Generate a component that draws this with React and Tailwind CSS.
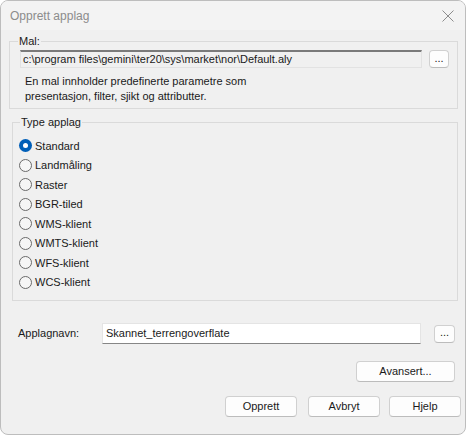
import { useState } from 'react';

const types = [
  'Standard',
  'Landmåling',
  'Raster',
  'BGR-tiled',
  'WMS-klient',
  'WMTS-klient',
  'WFS-klient',
  'WCS-klient',
];

function DotsButton({ className = '' }) {
  return (
    <button
      className={`flex items-center justify-center rounded-[4px] border border-[#d0d0d0] border-b-[#bcbcbc] bg-[#fdfdfd] text-[11px] leading-none text-[#1a1a1a] ${className}`}
    >
      <span className="-mt-[2px]">...</span>
    </button>
  );
}

function PushButton({ children, className = '' }) {
  return (
    <button
      className={`flex h-[21px] items-center justify-center rounded-[4px] border border-[#d0d0d0] border-b-[#bcbcbc] bg-[#fdfdfd] text-[11px] text-[#1a1a1a] ${className}`}
    >
      {children}
    </button>
  );
}

function Radio({ label, checked, onSelect }) {
  return (
    <label className="flex h-[19.5px] cursor-default items-center gap-[3px]" onClick={onSelect}>
      {checked ? (
        <span className="flex h-[13px] w-[13px] items-center justify-center rounded-full bg-[#005fb8]">
          <span className="h-[5px] w-[5px] rounded-full bg-white" />
        </span>
      ) : (
        <span className="h-[13px] w-[13px] rounded-full border border-[#6a6a6a] bg-[#f6f6f6]" />
      )}
      <span>{label}</span>
    </label>
  );
}

export default function App() {
  const [type, setType] = useState('Standard');

  return (
    <div
      className="h-[435px] w-[466px] bg-white text-[11px] text-[#1a1a1a]"
      style={{ fontFamily: '"Liberation Sans", Arial, sans-serif' }}
    >
      <div className="flex h-full w-full flex-col overflow-hidden rounded-[8px] border border-[#bdbdbd] bg-[#f0f0f0]">
        {/* tittellinje */}
        <div className="flex h-[29px] shrink-0 items-center justify-between bg-[#f3f3f3] pl-[9px] pr-[10px]">
          <span className="text-[12px] text-[#8c8c8c]">Opprett applag</span>
          <svg width="12" height="12" viewBox="0 0 12 12" className="mr-[1px]">
            <path d="M0.5 0.5 L11.5 11.5 M11.5 0.5 L0.5 11.5" stroke="#8c8c8c" strokeWidth="1" fill="none" />
          </svg>
        </div>

        {/* Mal */}
        <div className="ml-[8px] mt-[11px] w-[449px] border border-[#dadada] pb-[4px] pl-[10px] pr-[7px]">
          <div className="-mt-[8px] ml-[-2px] w-fit bg-[#f0f0f0] px-[1px] leading-[14px]">Mal:</div>
          <div className="mt-[2px] flex items-center gap-[7px]">
            <div className="flex h-[18px] w-[402px] items-center border border-[#e2e2e2] border-t-[2px] border-t-[#7a7a7a] bg-[#f0f0f0] pl-[2px]">
              c:\program files\gemini\ter20\sys\market\nor\Default.aly
            </div>
            <DotsButton className="h-[18px] w-[20px]" />
          </div>
          <p className="mt-[6px] pl-[5px] leading-[15px]">
            En mal innholder predefinerte parametre som
            <br />
            presentasjon, filter, sjikt og attributter.
          </p>
        </div>

        {/* Type applag */}
        <div className="ml-[11px] mt-[13px] w-[446px] border border-[#dadada] pb-[8px] pl-[6px]">
          <div className="-mt-[8px] ml-[1px] w-fit bg-[#f0f0f0] px-[1px] leading-[14px]">Type applag</div>
          <div className="mt-[7px]">
            {types.map((t) => (
              <Radio key={t} label={t} checked={type === t} onSelect={() => setType(t)} />
            ))}
          </div>
        </div>

        {/* Applagnavn */}
        <div className="mt-[22px] flex h-[21px] items-center pl-[17px]">
          <span className="w-[84px]">Applagnavn:</span>
          <div className="flex h-[21px] w-[319px] items-center border border-[#e4e4e4] border-b-[#868686] bg-white pl-[3px]">
            Skannet_terrengoverflate
          </div>
          <DotsButton className="ml-[13px] h-[18px] w-[21px]" />
        </div>

        <div className="mt-[17px] flex justify-end pr-[10px]">
          <PushButton className="w-[99px]">Avansert...</PushButton>
        </div>

        <div className="mt-[14px] flex justify-end pr-[4px]">
          <PushButton className="w-[72px]">Opprett</PushButton>
          <PushButton className="ml-[11px] w-[72px]">Avbryt</PushButton>
          <PushButton className="ml-[9px] w-[72px]">Hjelp</PushButton>
        </div>
      </div>
    </div>
  );
}
